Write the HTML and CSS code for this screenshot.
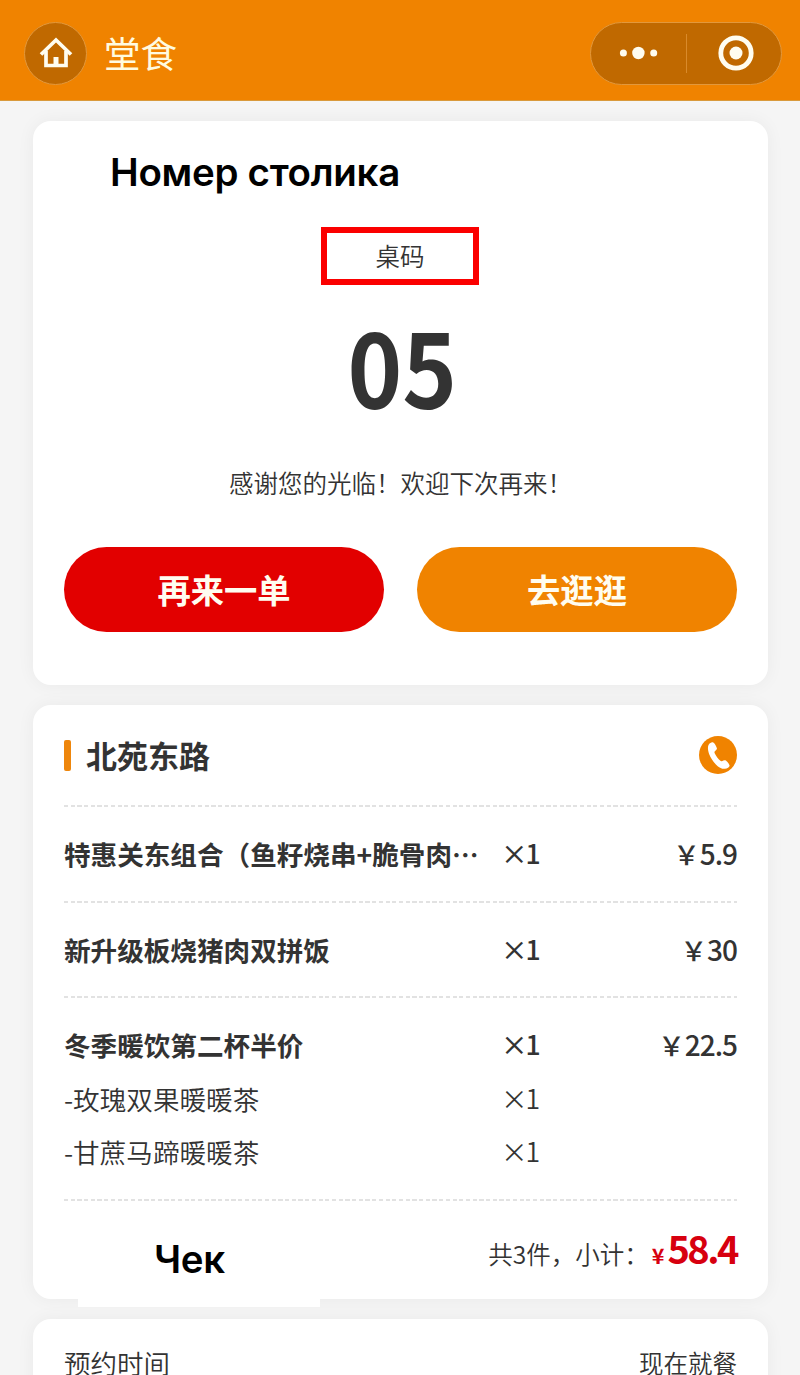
FILE: index.html
```html
<!DOCTYPE html>
<html lang="zh-CN">
<head>
  <meta charset="UTF-8"/>
  <title>堂食</title>
  <link rel="stylesheet" href="styles.css">
</head>
<body>
<header class="navbar">
  <button class="home-button">
    <svg width="34" height="32" viewBox="0 0 34 32" fill="none" stroke="#fffdf0" stroke-width="3.7">
      <path d="M2 17.5 17 3 32 17.5"/>
      <path d="M7 14v14.5h20V14"/>
      <path d="M17 20v8" stroke-width="5"/>
    </svg>
  </button>
  <h1 class="navbar-title">堂食</h1>
  <div class="capsule">
    <div class="capsule-part">
      <svg width="40" height="14" viewBox="0 0 40 14" fill="#fffdf0">
        <circle cx="4.400" cy="7" r="3.5"/>
        <circle cx="19.400" cy="7" r="6.2"/>
        <circle cx="34.700" cy="7" r="3.5"/>
      </svg>
    </div>
    <div class="capsule-part capsule-close">
      <svg width="36" height="36" viewBox="0 0 36 36">
        <circle cx="18" cy="18" r="15.2" fill="none" stroke="#fffdf0" stroke-width="4.8"/>
        <circle cx="18" cy="18" r="6.5" fill="#fffdf0"/>
      </svg>
    </div>
  </div>
</header>

<main class="page">
  <section class="card table-card">
    <div class="note">Номер столика</div>
    <div class="table-label">桌码</div>
    <div class="table-number">05</div>
    <p class="thanks">感谢您的光临！欢迎下次再来！</p>
    <div class="actions">
      <button class="btn btn-red">再来一单</button>
      <button class="btn btn-orange">去逛逛</button>
    </div>
  </section>

  <section class="card order-card">
    <div class="shop">
      <h2 class="shop-name">北苑东路</h2>
      <svg width="38" height="38" viewBox="0 0 38 38">
        <circle cx="19" cy="19" r="19" fill="#f08300"/>
        <path fill="#fff" d="M9.800 8.500C11 7 12.800 5.800 14.300 6.600c1.800 1.200 2.700 3.600 3.600 5.600.4 1.300-1.200 2.300-2.200 3.300-.5.6-.2 1.300.1 2 1.500 2.800 3.200 5.300 5.600 7.300.7.600 1.300.600 2 .200 1-.700 2.200-1.200 3.500-.400 1.300.900 2.900 2.900 3.600 4.600.600 1.900-2.200 3.200-4.600 3.500-2.700.300-5.100-.700-7.200-2.500-3.700-3.200-6.700-7.700-8.600-12.300-1-2.700-1.900-7 -.3-9.400z"/>
      </svg>
    </div>

    <div class="item">
      <div class="row">
        <span class="name">特惠关东组合（鱼籽烧串+脆骨肉…</span>
        <span class="count">×1</span>
        <span class="price">￥<span class="amount">5.9</span></span>
      </div>
    </div>
    <div class="item">
      <div class="row">
        <span class="name">新升级板烧猪肉双拼饭</span>
        <span class="count">×1</span>
        <span class="price">￥<span class="amount">30</span></span>
      </div>
    </div>
    <div class="item">
      <div class="row">
        <span class="name">冬季暖饮第二杯半价</span>
        <span class="count">×1</span>
        <span class="price">￥<span class="amount">22.5</span></span>
      </div>
      <div class="row sub">
        <span class="name">-玫瑰双果暖暖茶</span>
        <span class="count">×1</span>
      </div>
      <div class="row sub">
        <span class="name">-甘蔗马蹄暖暖茶</span>
        <span class="count">×1</span>
      </div>
    </div>

    <div class="total">
      <span class="note note-receipt">Чек</span>
      <div class="total-line">
        <span class="total-text">共3件，小计：</span>
        <span class="total-sign">¥</span>
        <span class="total-sum">58.4</span>
      </div>
    </div>
  </section>

  <section class="card time-card">
    <span>预约时间</span>
    <span class="time-value">现在就餐</span>
  </section>
</main>
</body>
</html>
```
FILE: styles.css
```css
* {
    box-sizing: border-box;
}
body {
    margin: 0;
    height: 1375px;
    overflow: hidden;
    background: #f5f5f5;
    color: #333;
    font-family: "Noto Sans CJK SC", sans-serif;
}
button {
    border: 0;
    padding: 0;
    font-family: inherit;
}
svg {
    display: block;
}

/* top bar */
.navbar {
    display: flex;
    align-items: center;
    height: 101px;
    padding: 6px 18px 0 24px;
    background: #f08300;
    border-bottom: 1px solid #d99a3c;
}
.home-button {
    display: flex;
    align-items: center;
    justify-content: center;
    width: 63px;
    height: 63px;
    border: 1px solid #e2983c;
    border-radius: 50%;
    background: #c06900;
}
.navbar-title {
    margin: 0 auto 0 17px;
    font-size: 36.5px;
    font-weight: 400;
    line-height: 50px;
    color: #fffbe0;
}
.capsule {
    display: flex;
    align-items: center;
    width: 192px;
    height: 63px;
    border: 1px solid #e2983c;
    border-radius: 32px;
    background: #c06900;
}
.capsule-part {
    display: flex;
    align-items: center;
    justify-content: center;
    width: 95px;
    height: 39px;
}
.capsule-close {
    padding-left: 4px;
    border-left: 1px solid #d98a2b;
}

/* cards */
.page {
    display: flex;
    flex-direction: column;
    gap: 20px;
    padding: 20px 32px 0 33px;
}
.card {
    padding: 0 31px;
    border-radius: 18px;
    background: #fff;
    box-shadow: 0 0 18px rgba(0, 0, 0, 0.05);
}
.note {
    font-family: Inter, sans-serif;
    font-size: 38.5px;
    font-weight: 600;
    line-height: 48px;
    letter-spacing: -0.3px;
    color: #000;
}

.table-card {
    display: flex;
    flex-direction: column;
    align-items: center;
    height: 564px;
    padding-top: 27px;
}
.table-card .note {
    align-self: flex-start;
    margin-left: 46px;
}
.table-label {
    width: 158px;
    height: 58px;
    margin: 31px 1px 0 0;
    border: 6px solid #fb0000;
    font-size: 24.5px;
    font-weight: 350;
    line-height: 45px;
    text-align: center;
}
.table-number {
    margin: 28px 0 0 4px;
    font-size: 102px;
    font-weight: 700;
    line-height: 104px;
    transform: scaleX(0.91);
}
.thanks {
    margin: 46px 0 0;
    font-size: 24.5px;
    font-weight: 350;
    line-height: 40px;
}
.actions {
    display: flex;
    gap: 33px;
    margin-top: 44px;
}
.btn {
    width: 320px;
    height: 85px;
    padding-bottom: 3px;
    border-radius: 43px;
    font-size: 33.3px;
    font-weight: 700;
    color: #fffdf0;
}
.btn-red {
    background: #e20000;
}
.btn-orange {
    background: #f08300;
}

.order-card {
    height: 594px;
}
.shop {
    display: flex;
    align-items: center;
    justify-content: space-between;
    height: 100px;
}
.shop-name {
    display: flex;
    align-items: center;
    gap: 15px;
    margin: 0;
    font-size: 31px;
    font-weight: 700;
    line-height: 40px;
}
.shop-name::before {
    content: "";
    width: 7px;
    height: 31px;
    border-radius: 2px;
    background: #ee860c;
}
.item::before,
.total::before {
    content: "";
    display: block;
    height: 2px;
    background: repeating-linear-gradient(90deg, #e2e2e2 0 4.2px, transparent 4.2px 6.7px);
}
.item {
    padding-bottom: 21px;
}
.row {
    display: grid;
    grid-template-columns: 437px 90px 1fr;
    margin-top: 21px;
    font-size: 26.6px;
    font-weight: 500;
    line-height: 51.5px;
}
.row.sub {
    margin-top: 2px;
    font-weight: 350;
}
.name {
    font-weight: 700;
    white-space: nowrap;
}
.sub .name {
    font-weight: 350;
}
.count {
    line-height: 50px;
    letter-spacing: -2px;
}
.price {
    text-align: right;
}
.amount {
    font-size: 28px;
    letter-spacing: -1px;
}

.total {
    position: relative;
    display: flex;
    justify-content: space-between;
    height: 99px;
    white-space: nowrap;
}
.total::before {
    position: absolute;
    top: 0;
    left: 0;
    right: 0;
}
/* white strip hanging below the card edge */
.total::after {
    content: "";
    position: absolute;
    left: 14px;
    bottom: -9px;
    width: 242px;
    height: 12px;
    background: #fff;
}
.note-receipt {
    margin: 36px 0 0 90px;
}
.total-line {
    display: flex;
    align-items: baseline;
    margin-top: 25px;
}
.total-text {
    font-size: 24.5px;
    font-weight: 350;
}
.total-sign {
    margin: 0 3px 0 3px;
    font-size: 21.5px;
    font-weight: 700;
    color: #d7000f;
}
.total-sum {
    font-size: 38px;
    font-weight: 700;
    line-height: 48px;
    letter-spacing: -2.5px;
    color: #d7000f;
}

.time-card {
    display: flex;
    justify-content: space-between;
    height: 120px;
    padding-top: 24px;
    font-size: 26.5px;
    font-weight: 350;
    line-height: 40px;
}
.time-value {
    font-size: 24.5px;
}
```
